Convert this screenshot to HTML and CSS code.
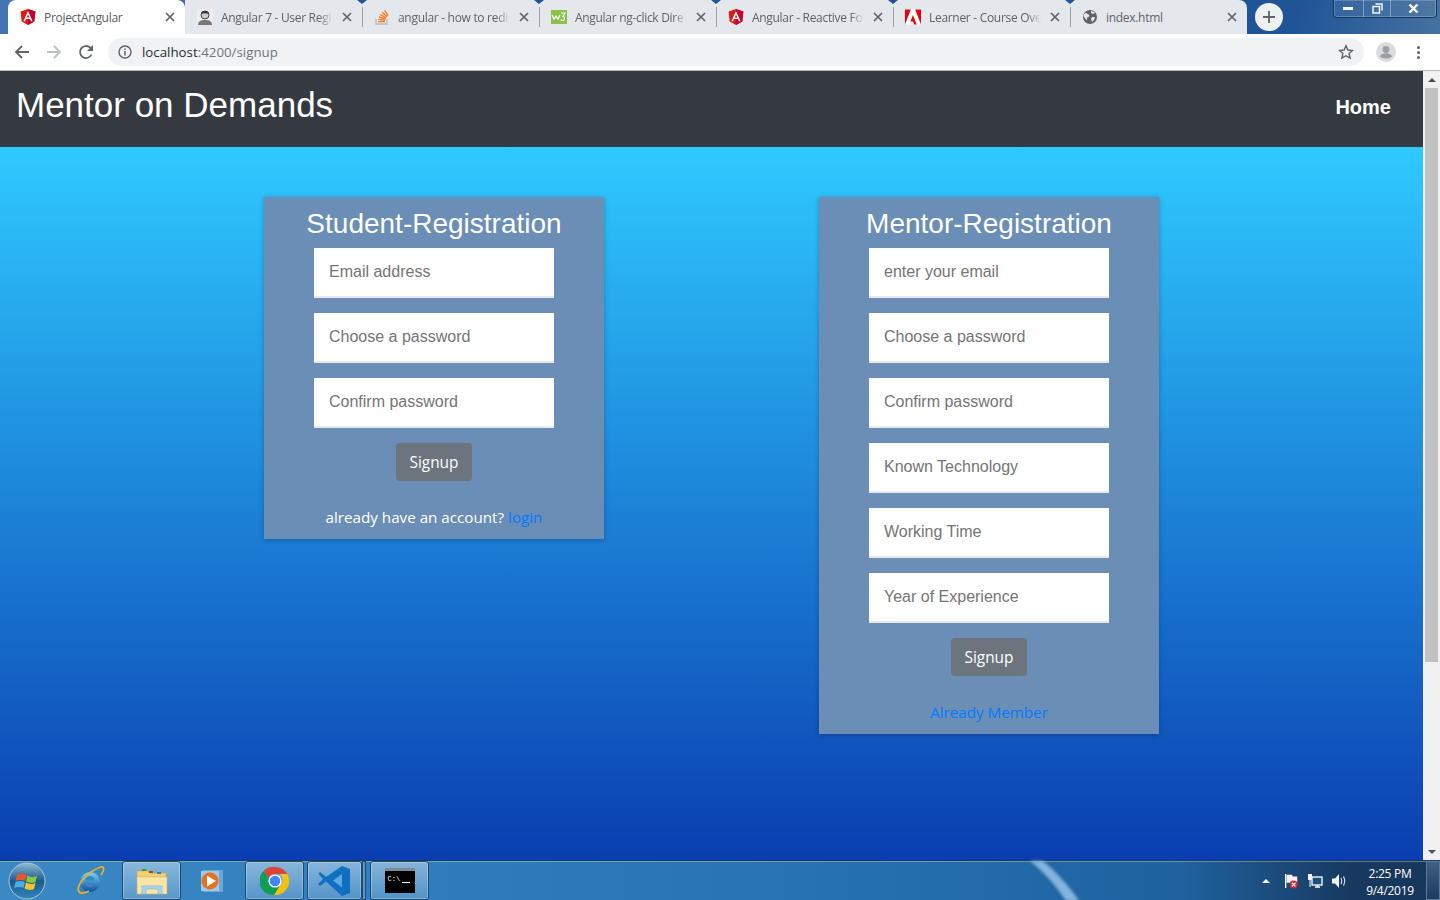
FILE: index.html
```html
<!doctype html>
<html>
<head>
<title>ProjectAngular</title>
<meta charset="utf-8">
<link rel="stylesheet" href="styles.css">
</head>
<body>

<svg class="defs" width="0" height="0">
  <symbol id="ng" viewBox="0 0 16 16">
    <path d="M8 0 .6 2.6l1.100 9.800L8 16l6.300-3.600 1.100-9.800z" fill="#dd1b16"/>
    <path d="M8 0v16l6.300-3.600 1.100-9.800z" fill="#c3002f"/>
    <path d="M8 2 3.400 12.300h1.700l.9-2.300h4l.9 2.300h1.700zm1.300 6.600H6.700L8 5.500z" fill="#fff"/>
  </symbol>
  <symbol id="x" viewBox="0 0 10 10">
    <path d="M1 1l8 8M9 1 1 9" stroke="#5f6368" stroke-width="1.700" fill="none"/>
  </symbol>
  <linearGradient id="orbglass" x1="0" y1="0" x2="0" y2="1">
    <stop offset="0" stop-color="#8fb8d4"/>
    <stop offset=".5" stop-color="#1c5a8c"/>
    <stop offset="1" stop-color="#2f86bd"/>
  </linearGradient>
  <linearGradient id="iefill" x1="0" y1="0" x2="0" y2="1">
    <stop offset="0" stop-color="#7fd0f2"/>
    <stop offset="1" stop-color="#0c4f9f"/>
  </linearGradient>
</svg>

<header class="tabstrip">
  <div class="tab active">
    <svg class="favicon"><use href="#ng"/></svg>
    <span class="tab-title">ProjectAngular</span>
    <svg class="tab-x"><use href="#x"/></svg>
  </div>
  <div class="tab">
    <svg class="favicon" viewBox="0 0 16 16">
      <rect width="16" height="16" fill="#eee"/>
      <path d="M1 16c0-4 3-5 7-5s7 1 7 5z" fill="#777"/>
      <circle cx="8" cy="6" r="4" fill="#ccc" stroke="#444"/>
      <path d="M4 5c1-4 7-4 8 0-3-1-5-1-8 0z" fill="#333"/>
    </svg>
    <span class="tab-title">Angular 7 - User Regi</span>
    <svg class="tab-x"><use href="#x"/></svg>
  </div>
  <div class="tab sep">
    <svg class="favicon" viewBox="0 0 16 16">
      <path d="M2 10v5h11v-5" fill="none" stroke="#bcbbbb" stroke-width="1.400"/>
      <path d="M4 12.600h7M4.300 10.400l6.800.8M5 8l6.500 2M6.300 5.600l5.900 3.200M8.200 3.400l5 4.300M10.600 1.400l3.600 5.300" stroke="#f48024" stroke-width="1.400" fill="none"/>
    </svg>
    <span class="tab-title">angular - how to redi</span>
    <svg class="tab-x"><use href="#x"/></svg>
  </div>
  <div class="tab sep">
    <svg class="favicon" viewBox="0 0 16 16">
      <rect y="1" width="16" height="14" fill="#8ac249"/>
      <path d="M1 6l2 4 2-3 2 3 2-4M10 4h4l-2 3.500c2 0 2 4-.5 4-1 0-1.500-.5-1.700-1" fill="none" stroke="#fff" stroke-width="1.200"/>
    </svg>
    <span class="tab-title">Angular ng-click Dire</span>
    <svg class="tab-x"><use href="#x"/></svg>
  </div>
  <div class="tab sep">
    <svg class="favicon"><use href="#ng"/></svg>
    <span class="tab-title">Angular - Reactive Fo</span>
    <svg class="tab-x"><use href="#x"/></svg>
  </div>
  <div class="tab sep">
    <svg class="favicon" viewBox="0 0 16 16">
      <rect width="16" height="15" y=".5" fill="#fff"/>
      <path d="M0 .5h5.800L0 15.500zM16 .5h-5.800L16 15.500zM8 6l3.700 9.500H9.200L8 12.500H5.400z" fill="#e8000f"/>
    </svg>
    <span class="tab-title">Learner - Course Ove</span>
    <svg class="tab-x"><use href="#x"/></svg>
  </div>
  <div class="tab sep last">
    <svg class="favicon" viewBox="0 0 16 16">
      <circle cx="8" cy="8" r="7" fill="#5f6368"/>
      <path d="M3 4c2 0 3 1 4 2s0 2-1 2-1 2-1 3-2-2-3-3 0-3 1-4zM9 2c2 0 3 1 4 2l-2 1-2-1zM10 8h3l-1 3-2 2-1-3z" fill="#e4e7eb"/>
    </svg>
    <span class="tab-title">index.html</span>
    <svg class="tab-x"><use href="#x"/></svg>
  </div>
  <div class="newtab">
    <svg width="12" height="12" viewBox="0 0 12 12"><path d="M6 0v12M0 6h12" stroke="#5f6368" stroke-width="1.800"/></svg>
  </div>
  <div class="winctl">
    <div class="wc wc-min"><svg width="11" height="5" viewBox="0 0 11 5"><rect y="1" width="10" height="3" fill="#f2f5f9"/></svg></div>
    <div class="wc wc-max"><svg width="11" height="11" viewBox="0 0 11 11"><path d="M3.500 1h6.500v6.500M1 3.500h6.500V10H1z" fill="none" stroke="#f2f5f9" stroke-width="1.500"/></svg></div>
    <div class="wc wc-close"><svg width="11" height="9" viewBox="0 0 11 9"><path d="M1.500 .5l8 8M9.500 .5l-8 8" stroke="#fff" stroke-width="2.400"/></svg></div>
  </div>
</header>

<div class="toolbar">
  <svg class="nav-ic" viewBox="0 0 16 16"><path d="M15 8H2M8 2 2 8l6 6" fill="none" stroke="#5f6368" stroke-width="1.800"/></svg>
  <svg class="nav-ic" viewBox="0 0 16 16"><path d="M1 8h13M8 2l6 6-6 6" fill="none" stroke="#bdc1c6" stroke-width="1.800"/></svg>
  <svg class="nav-ic" viewBox="0 0 16 16"><path d="M13.500 10.500A6 6 0 1 1 12.200 3.700L14 5.500" fill="none" stroke="#5f6368" stroke-width="1.800"/><path d="M15 1v6H9z" fill="#5f6368"/></svg>
  <div class="omnibox">
    <svg class="info" viewBox="0 0 14 14"><circle cx="7" cy="7" r="6" fill="none" stroke="#5f6368" stroke-width="1.400"/><path d="M7 6v4.500M7 3.500v1.500" stroke="#5f6368" stroke-width="1.500"/></svg>
    <span class="url"><b>localhost</b>:4200/signup</span>
    <svg class="star" viewBox="0 0 16 16"><path d="M8 1.800l1.900 4.200 4.600.5-3.400 3 1 4.500-4.100-2.300L3.900 14l1-4.500-3.400-3 4.600-.5z" fill="none" stroke="#5f6368" stroke-width="1.400"/></svg>
  </div>
  <svg class="avatar" viewBox="0 0 20 20"><circle cx="10" cy="10" r="10" fill="#dadce0"/><circle cx="10" cy="7.500" r="3.400" fill="#9aa0a6"/><path d="M3.800 14.500c1-2.500 3.500-3.300 6.200-3.300s5.200.8 6.200 3.300c-3 2.800-9.400 2.800-12.400 0z" fill="#9aa0a6"/></svg>
  <div class="kebab"><i></i><i></i><i></i></div>
</div>

<div class="viewport">
  <main class="page">
    <nav class="navbar">
      <a class="brand">Mentor on Demands</a>
      <a class="nav-home">Home</a>
    </nav>
    <div class="forms">
      <section class="card">
        <h2>Student-Registration</h2>
        <div class="field">Email address</div>
        <div class="field">Choose a password</div>
        <div class="field">Confirm password</div>
        <button class="signup">Signup</button>
        <p class="foot">already have an account? <a>login</a></p>
      </section>
      <section class="card">
        <h2>Mentor-Registration</h2>
        <div class="field">enter your email</div>
        <div class="field">Choose a password</div>
        <div class="field">Confirm password</div>
        <div class="field">Known Technology</div>
        <div class="field">Working Time</div>
        <div class="field">Year of Experience</div>
        <button class="signup">Signup</button>
        <p class="foot"><a>Already Member</a></p>
      </section>
    </div>
  </main>
  <div class="scrollbar">
    <div class="sb-btn"><i class="arrow-up"></i></div>
    <div class="sb-track"><div class="sb-thumb"></div></div>
    <div class="sb-btn"><i class="arrow-down"></i></div>
  </div>
</div>

<footer class="taskbar">
  <svg class="streak" width="1440" height="40" viewBox="0 0 1440 40">
    <path d="M1030 0h13c14 12 27 26 36 40h-13c-9-14-21-28-36-40z" fill="#a5cdee" opacity=".75"/>
  </svg>
  <svg class="orb" viewBox="0 0 38 38">
    <circle cx="19" cy="19" r="18" fill="url(#orbglass)" stroke="#a9c6da" stroke-width="1"/>
    <path d="M9 13c3-2 6-2 9.500 0L17 19c-3-1.500-6-1.500-9.500 0z" fill="#e8562a"/>
    <path d="M19.500 13.500c3 2 6 2 9.500.5l-1.500 6c-3 1.500-6 1-9.500-.5z" fill="#8cc63a"/>
    <path d="M7.500 20c3-1.500 6-1.500 9.500 0L15.500 26c-3-1.500-6-1.500-9.500 0z" fill="#4aaee8"/>
    <path d="M18 20.500c3 1.500 6 2 9.500.5L26 27c-3 1.500-6 1-9.500-.5z" fill="#f7c22c"/>
  </svg>
  <div class="tb-btn plain ie">
    <svg viewBox="0 0 32 32" width="32" height="32">
      <path d="M16 7a10 10 0 1 0 9.500 13h-6a4.500 4.500 0 0 1-8-1.500H26C26.500 12 22 7 16 7zm-4.500 8.500a4.500 4.500 0 0 1 9 0z" fill="url(#iefill)"/>
      <path d="M5 27C1 21 14 6 27 2c4-1 3 4 0 8M5 27c2 2 6 1 10-1" fill="none" stroke="#e9b022" stroke-width="1.800"/>
    </svg>
  </div>
  <div class="tb-btn folder">
    <svg viewBox="0 0 32 30" width="32" height="30">
      <path d="M1 5h11l2 2h16v6H1z" fill="#f0d070" stroke="#c9a74a" stroke-width=".6"/>
      <rect x="6" y="3" width="4" height="2" fill="#3aa03a"/><rect x="13" y="5" width="4" height="2" fill="#c8302a"/><rect x="21" y="6" width="4" height="2" fill="#2a80c8"/>
      <path d="M1 11h30v17H1z" fill="#f7e6a8" stroke="#d3b766" stroke-width=".6"/>
      <path d="M6 28v-8h20v8h-4v-5H10v5z" fill="#a9d4ea" stroke="#7fb4d0" stroke-width=".6"/>
    </svg>
  </div>
  <div class="tb-btn plain wmp">
    <svg viewBox="0 0 28 28" width="28" height="28">
      <rect x="4" y="3" width="20" height="22" fill="#7fb4de" opacity=".75"/>
      <rect x="2" y="4" width="18" height="20" fill="#9ec8e8"/>
      <circle cx="11" cy="14" r="8.500" fill="#e8701c"/>
      <path d="M8 8.500v11l9-5.500z" fill="#fff"/>
    </svg>
  </div>
  <div class="tb-btn chrome">
    <svg viewBox="0 0 32 32" width="30" height="30">
      <path d="M16 1a15 15 0 0 1 13 7.500H16a7.500 7.500 0 0 0-7 4.500L4 5a15 15 0 0 1 12-4z" fill="#db4437"/>
      <path d="M29 8.500A15 15 0 0 1 15 31l6.500-11a7.500 7.500 0 0 0 0-11.500z" fill="#f4c20d"/>
      <path d="M4 5a15 15 0 0 0 11 26l6.500-11a7.500 7.500 0 0 1-12.500-7z" fill="#0f9d58"/>
      <circle cx="16" cy="16" r="7" fill="#fff"/><circle cx="16" cy="16" r="5.600" fill="#4285f4"/>
    </svg>
  </div>
  <div class="tb-btn vscode">
    <svg viewBox="0 0 34 32" width="34" height="32">
      <path d="M24 1l8 3v24l-8 3L8 16.500 2 21 0 19l5-5-4.500-5L2 7l6 5z" fill="#0f6fc0"/>
      <path d="M24 9l-9 6.500 9 7z" fill="#5fa8df"/>
    </svg>
  </div>
  <div class="tb-sliver"></div>
  <div class="tb-btn cmd">
    <div class="cmd-win"><span>C:\</span><i></i></div>
  </div>
  <div class="tray">
    <i class="tray-up"></i>
    <svg class="tray-ic flag" viewBox="0 0 16 18">
      <path d="M2 1v16" stroke="#fff" stroke-width="1.500"/><path d="M3 2h6l1 2h5v7H3z" fill="#f2f2f2"/>
      <circle cx="11" cy="13" r="4.500" fill="#d8262a"/><path d="M9 11l4 4M13 11l-4 4" stroke="#fff" stroke-width="1.300"/>
    </svg>
    <svg class="tray-ic net" viewBox="0 0 16 16">
      <rect x="5" y="4" width="10" height="8" fill="#1d4f7c" stroke="#fff" stroke-width="1.300"/><path d="M8 14h5M10.500 12v2" stroke="#fff" stroke-width="1.300"/>
      <rect x="1" y="1" width="4" height="6" fill="#f2f2f2"/><path d="M3 7v7" stroke="#fff"/>
    </svg>
    <svg class="tray-ic vol" viewBox="0 0 16 16">
      <path d="M1 5.500h3L8 1v14l-4-4.500H1z" fill="#f2f2f2"/><path d="M10 5c1 2 1 4 0 6M12.500 3.500c1.600 3 1.600 6 0 9" fill="none" stroke="#dce8f2" stroke-width="1.100"/>
    </svg>
    <div class="clock"><span>2:25 PM</span><span>9/4/2019</span></div>
    <div class="showdesk"></div>
  </div>
</footer>

</body>
</html>
```

FILE: styles.css
```css
* {
  box-sizing: border-box;
}

html, body {
  margin: 0;
  height: 100%;
  overflow: hidden;
}

body {
  width: 1440px;
  height: 900px;
  display: flex;
  flex-direction: column;
  font-family: "Open Sans", "Noto Sans", sans-serif;
  background: #fff;
}

.defs {
  position: absolute;
}

/* browser tabs */

.tabstrip {
  height: 34px;
  flex: none;
  display: flex;
  padding-left: 8px;
  background: linear-gradient(100deg, #4474b4 0, #1f5597 50%, #1f5597 90%, #46719f 100%);
}

.tab {
  width: 177px;
  height: 34px;
  flex: none;
  display: flex;
  align-items: center;
  padding: 0 10px 0 12px;
  background: #e4e7eb;
  position: relative;
  font-size: 12px;
  color: #5f6368;
}

.tab.active {
  background: #fff;
  color: #5a5e62;
  border-radius: 8px 8px 0 0;
}

.tab.sep::before {
  content: "";
  position: absolute;
  left: 0;
  top: 7px;
  bottom: 7px;
  width: 1px;
  background: #9aa0a6;
}

.tab.sep::after {
  content: "";
  position: absolute;
  left: -5px;
  top: 0;
  border-left: 5px solid transparent;
  border-right: 5px solid transparent;
  border-top: 4px solid #1f5597;
}

.tab.last {
  border-radius: 0 8px 0 0;
}

.favicon {
  width: 16px;
  height: 16px;
  flex: none;
  margin-right: 8px;
}

.tab-title {
  flex: 1;
  overflow: hidden;
  white-space: nowrap;
  letter-spacing: -.3px;
  -webkit-mask-image: linear-gradient(90deg, #000 88%, transparent 100%);
  mask-image: linear-gradient(90deg, #000 88%, transparent 100%);
}

.active .tab-title, .last .tab-title {
  -webkit-mask-image: none;
  mask-image: none;
}

.tab-x {
  width: 10px;
  height: 10px;
  flex: none;
  margin-left: 9px;
}

.newtab {
  width: 28px;
  height: 28px;
  margin: 3px 0 0 8px;
  flex: none;
  border-radius: 50%;
  background: #eef1f4;
  display: flex;
  align-items: center;
  justify-content: center;
}

.winctl {
  width: 104px;
  height: 18px;
  margin-left: auto;
  margin-right: 3px;
  display: flex;
  border: 1px solid #16395f;
  border-top: 0;
  border-radius: 0 0 4px 4px;
  background: rgba(255, 255, 255, .06);
  box-shadow: inset 0 0 0 1px rgba(255, 255, 255, .2);
}

.wc {
  display: flex;
  align-items: center;
  justify-content: center;
  border-right: 1px solid rgba(255, 255, 255, .35);
}

.wc-min {
  width: 30px;
}

.wc-max {
  width: 27px;
}

.wc-close {
  flex: 1;
  border-right: 0;
}

/* address bar */

.toolbar {
  height: 37px;
  flex: none;
  display: flex;
  align-items: center;
  padding: 0 10px 0 14px;
  background: #fff;
  border-bottom: 1px solid #b8babc;
}

.nav-ic {
  width: 16px;
  height: 16px;
  margin-right: 16px;
  flex: none;
}

.omnibox {
  width: 1256px;
  height: 28px;
  margin: 0 0 0 -2px;
  padding: 0 10px;
  display: flex;
  align-items: center;
  border-radius: 14px;
  background: #f0f2f4;
  font-size: 13.3px;
  color: #70757a;
}

.info {
  width: 14px;
  height: 14px;
  margin-right: 10px;
}

.url b {
  font-weight: normal;
  color: #2a2d30;
}

.star {
  width: 16px;
  height: 16px;
  margin-left: auto;
}

.avatar {
  width: 20px;
  height: 20px;
  margin-left: 12px;
  flex: none;
}

.kebab {
  margin-left: 21px;
  display: flex;
  flex-direction: column;
  gap: 2px;
}

.kebab i {
  width: 3px;
  height: 3px;
  border-radius: 50%;
  background: #5f6368;
}

/* page */

.viewport {
  height: 789px;
  flex: none;
  display: flex;
}

.page {
  flex: 1;
  display: flex;
  flex-direction: column;
  background: linear-gradient(180deg, #2fc9ff 76px, #0a3eb0 100%);
}

.navbar {
  height: 76px;
  flex: none;
  display: flex;
  align-items: center;
  justify-content: space-between;
  padding: 0 32px 9px 16px;
  background: #343a40;
  color: #fff;
  font-family: "Liberation Sans", Arial, sans-serif;
}

.brand {
  font-size: 35px;
}

.nav-home {
  padding-top: 6px;
  font-size: 20px;
  font-weight: bold;
}

.forms {
  display: flex;
  justify-content: space-between;
  align-items: flex-start;
  padding: 50px 264px 0;
}

.card {
  width: 340px;
  display: flex;
  flex-direction: column;
  align-items: center;
  background: #6a8eb5;
  box-shadow: 0 1px 5px rgba(0, 0, 0, .25);
}

.card h2 {
  margin: 8px 0 5px;
  height: 38px;
  line-height: 38px;
  font-family: "Liberation Sans", Arial, sans-serif;
  font-size: 28px;
  font-weight: normal;
  color: #fff;
}

.field {
  width: 240px;
  height: 50px;
  margin-bottom: 15px;
  padding: 0 15px;
  display: flex;
  align-items: center;
  background: #fff;
  border-bottom: 2px solid #e8e8e8;
  font-family: "Liberation Sans", Arial, sans-serif;
  font-size: 16px;
  color: #757575;
}

.signup {
  width: 76px;
  height: 38px;
  padding: 0;
  border: 0;
  border-radius: 4px;
  background: #6c757d;
  color: #fff;
  font-family: "Open Sans", sans-serif;
  font-size: 15.4px;
}

.foot {
  margin: 24px 0 0;
  height: 34px;
  line-height: 24px;
  font-size: 15.2px;
  color: #fff;
}

.foot a {
  color: #007bff;
}

.scrollbar {
  width: 17px;
  flex: none;
  display: flex;
  flex-direction: column;
  background: #f1f1f1;
}

.sb-btn {
  height: 17px;
  flex: none;
  display: flex;
  align-items: center;
  justify-content: center;
}

.arrow-up {
  border-left: 4px solid transparent;
  border-right: 4px solid transparent;
  border-bottom: 4px solid #505050;
}

.arrow-down {
  border-left: 4px solid transparent;
  border-right: 4px solid transparent;
  border-top: 4px solid #505050;
}

.sb-track {
  flex: 1;
  padding: 0 2px;
}

.sb-thumb {
  height: 574px;
  background: #c1c1c1;
}

/* windows taskbar */

.taskbar {
  height: 40px;
  flex: none;
  position: relative;
  display: flex;
  align-items: center;
  border-top: 1px solid #1b3a5c;
  background: linear-gradient(90deg, #3a88c4 0, #2f7dbd 30%, #2570b0 60%, #1f629f 82%, #17395f 94%, #17375c 100%);
  box-shadow: inset 0 1px 0 rgba(255, 255, 255, .3);
}

.streak {
  position: absolute;
  left: 0;
  top: 0;
  filter: blur(1.5px);
}

.orb {
  width: 38px;
  height: 38px;
  margin: 0 19px 0 8px;
  flex: none;
  position: relative;
}

.tb-btn {
  height: 39px;
  flex: none;
  position: relative;
  display: flex;
  align-items: center;
  justify-content: center;
  border: 1px solid #1d4a73;
  border-radius: 3px;
  background: linear-gradient(180deg, rgba(255, 255, 255, .42), rgba(255, 255, 255, .16));
  box-shadow: inset 0 0 0 1px rgba(255, 255, 255, .28);
}

.tb-btn.plain {
  border: 0;
  background: none;
  box-shadow: none;
}

.ie {
  width: 50px;
}

.folder {
  width: 59px;
  margin-left: 7px;
}

.wmp {
  width: 60px;
  margin: 0 2px;
}

.chrome {
  width: 59px;
  margin-right: 3px;
}

.vscode {
  width: 55px;
}

.tb-sliver {
  width: 4px;
  height: 39px;
  flex: none;
  position: relative;
  margin-right: 4px;
  background: rgba(255, 255, 255, .2);
  border: 1px solid #1d4a73;
}

.cmd {
  width: 59px;
}

.cmd-win {
  width: 30px;
  height: 25px;
  padding: 4px 0 0 3px;
  background: #000;
  border-top: 3px solid #7f8a94;
  display: flex;
  align-items: flex-start;
  gap: 2px;
  color: #fff;
  font-family: "Liberation Mono", monospace;
  font-size: 7px;
  line-height: 8px;
}

.cmd-win i {
  width: 8px;
  height: 1px;
  margin-top: 7px;
  background: #fff;
}

.tray {
  margin-left: auto;
  height: 39px;
  position: relative;
  display: flex;
  align-items: center;
  color: #fff;
}

.tray-up {
  margin-right: 13px;
  border-left: 4px solid transparent;
  border-right: 4px solid transparent;
  border-bottom: 4px solid #fff;
}

.tray-ic {
  width: 16px;
  height: 16px;
  margin-right: 8px;
  flex: none;
}

.clock {
  width: 64px;
  margin-left: 3px;
  padding-top: 3px;
  display: flex;
  flex-direction: column;
  align-items: center;
  font-family: "Open Sans", sans-serif;
  font-size: 12px;
  line-height: 17px;
  letter-spacing: -.3px;
}

.showdesk {
  width: 14px;
  height: 39px;
  margin-left: 4px;
  border: 1px solid #5d7a98;
  background: linear-gradient(180deg, #3f5f80, #1d3a5f);
}
```
